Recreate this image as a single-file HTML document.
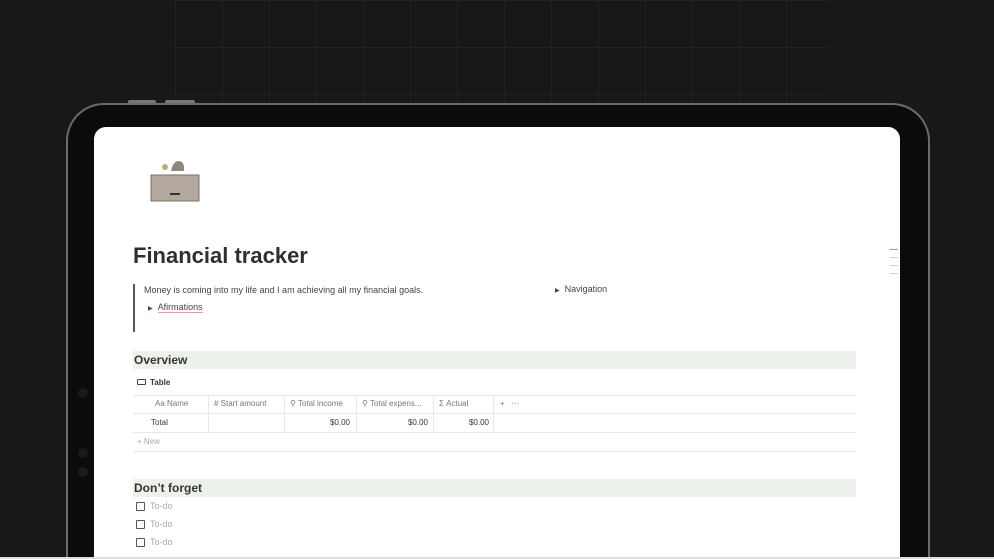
<!DOCTYPE html>
<html style="width:994px;height:559px;overflow:hidden"><head><meta charset="utf-8"><style>
*{margin:0;padding:0;box-sizing:border-box}
body{width:994px;height:559px;overflow:hidden;background:#181818;font-family:"Liberation Sans",sans-serif;position:relative}
.grid{position:absolute;left:175px;top:0;width:655px;height:104px;background-image:linear-gradient(90deg,rgba(80,80,120,.14) 1px,transparent 1px),linear-gradient(rgba(80,80,120,.14) 1px,transparent 1px);background-size:47px 47px}
.dev{position:absolute;left:66px;top:103px;width:864px;height:456px;background:#0b0b0b;border:2px solid #6a6a6a;border-bottom:none;border-radius:38px 38px 0 0}
.btn{position:absolute;top:100px;height:4px;background:#777;border-radius:2px}
.scr{position:absolute;left:94px;top:127px;width:806px;height:430px;background:#fff;border-radius:12px 12px 0 0;color:#37352f;overflow:hidden}
.a{position:absolute}
.h{left:39px;width:723px;height:18px;background:#edf1ec;font-weight:bold;font-size:12px;padding:2px 1px}
.t{font-size:8px;color:#777}
.line{position:absolute;left:39px;width:723px;height:1px;background:#e8e8e6}
.cb{display:inline-block;width:9px;height:9px;border:1.3px solid #555;border-radius:1px;vertical-align:middle;margin-right:5px}
</style></head><body>
<div class="grid"></div>
<div class="btn" style="left:128px;width:28px"></div>
<div class="btn" style="left:165px;width:30px"></div>
<div class="dev"></div>
<div class="a" style="left:78px;top:388px;width:10px;height:10px;border-radius:5px;background:#1a1a1a"></div>
<div class="a" style="left:78px;top:448px;width:10px;height:10px;border-radius:5px;background:#1a1a1a"></div>
<div class="a" style="left:78px;top:467px;width:10px;height:10px;border-radius:5px;background:#1a1a1a"></div>
<div class="scr">
 <svg class="a" style="left:55px;top:28px" width="52" height="48"><circle cx="16" cy="12" r="3" fill="#b9b070"/><path d="M22 16 q2-10 8-10 q6 1 5 10z" fill="#8c877f"/><path d="M2 20 h48 v26 h-48z" fill="#b3a89d" stroke="#7a7068"/><rect x="21" y="38" width="10" height="2" fill="#333"/></svg>
 <div class="a" style="left:39px;top:116px;font-size:22px;font-weight:bold;color:#2f2f2f">Financial tracker</div>
 <div class="a" style="left:39px;top:157px;width:2px;height:48px;background:#555"></div>
 <div class="a" style="left:50px;top:158px;font-size:9px;color:#444">Money is coming into my life and I am achieving all my financial goals.</div>
 <div class="a" style="left:54px;top:175px;font-size:9px;color:#444"><span style="font-size:6px">▶</span>&nbsp;&nbsp;<span style="border-bottom:1px solid #e0a0a0">Afirmations</span></div>
 <div class="a" style="left:461px;top:157px;font-size:9px;color:#444"><span style="font-size:6px">▶</span>&nbsp;&nbsp;Navigation</div>
 <div class="a" style="left:796px;top:122px;width:8px;height:1px;background:#999"></div>
 <div class="a" style="left:796px;top:130px;width:8px;height:1px;background:#ccc"></div>
 <div class="a" style="left:796px;top:138px;width:8px;height:1px;background:#ccc"></div>
 <div class="a" style="left:796px;top:146px;width:8px;height:1px;background:#ccc"></div>
 <div class="a h" style="top:224px">Overview</div>
 <div class="a" style="left:43px;top:251px;font-size:8px;font-weight:bold"><span style="display:inline-block;width:9px;height:6px;border:1.2px solid #444;border-radius:1px;margin-right:4px"></span>Table</div>
 <div class="line" style="top:268px"></div>
 <div class="line" style="top:286px"></div>
 <div class="line" style="top:305px"></div>
 <div class="line" style="top:324px"></div>
 <div class="a" style="left:114px;top:268px;width:1px;height:37px;background:#e8e8e6"></div>
 <div class="a" style="left:190px;top:268px;width:1px;height:37px;background:#e8e8e6"></div>
 <div class="a" style="left:262px;top:268px;width:1px;height:37px;background:#e8e8e6"></div>
 <div class="a" style="left:339px;top:268px;width:1px;height:37px;background:#e8e8e6"></div>
 <div class="a" style="left:399px;top:268px;width:1px;height:37px;background:#e8e8e6"></div>
 <div class="a t" style="left:61px;top:272px">Aa Name</div>
 <div class="a t" style="left:120px;top:272px"># Start amount</div>
 <div class="a t" style="left:196px;top:272px">⚲ Total income</div>
 <div class="a t" style="left:268px;top:272px">⚲ Total expens...</div>
 <div class="a t" style="left:345px;top:272px">Σ Actual</div>
 <div class="a t" style="left:406px;top:272px">+ &nbsp;&nbsp;···</div>
 <div class="a" style="left:57px;top:291px;font-size:8px">Total</div>
 <div class="a" style="left:200px;top:291px;width:56px;text-align:right;font-size:8px">$0.00</div>
 <div class="a" style="left:272px;top:291px;width:62px;text-align:right;font-size:8px">$0.00</div>
 <div class="a" style="left:345px;top:291px;width:50px;text-align:right;font-size:8px">$0.00</div>
 <div class="a t" style="left:43px;top:310px;color:#aaa">+ New</div>
 <div class="a h" style="top:352px">Don’t forget</div>
 <div class="a" style="left:42px;top:374px;font-size:9px;color:#aaa"><span class="cb"></span>To-do</div>
 <div class="a" style="left:42px;top:392px;font-size:9px;color:#aaa"><span class="cb"></span>To-do</div>
 <div class="a" style="left:42px;top:410px;font-size:9px;color:#aaa"><span class="cb"></span>To-do</div>
</div>
<div class="a" style="left:0;top:557px;width:994px;height:2px;background:#ddd"></div>
</body></html>
